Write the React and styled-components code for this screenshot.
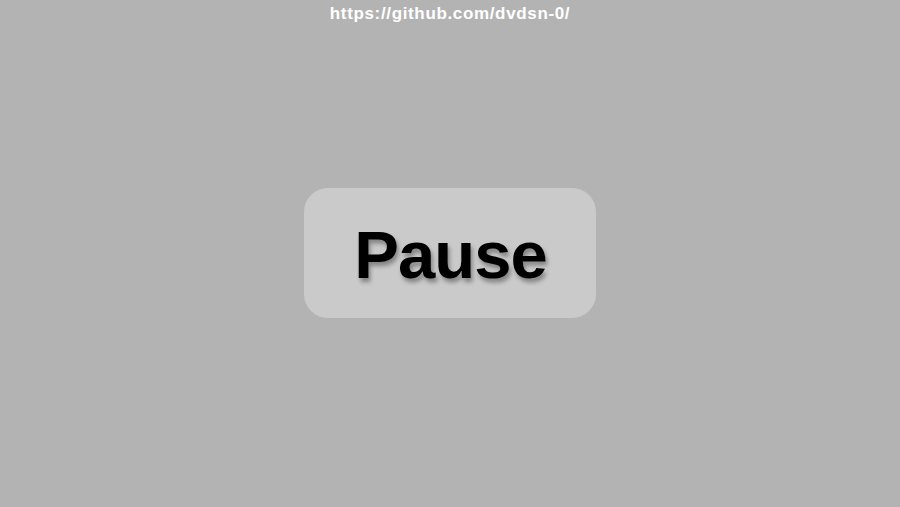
import styled, { createGlobalStyle } from 'styled-components';

const GlobalStyle = createGlobalStyle`
    html, body {
        margin: 0;
        padding: 0;
        background-color: #b3b3b3;
    }
    body {
        font-family: "Liberation Sans", Arial, sans-serif;
    }
`;

const Page = styled.div`
    // background-color: pink;
    width: 900px;
    height: 507px;
    display: flex;
    flex-direction: column;
    align-items: center;
    box-sizing: border-box;
    padding-top: 4px;
`;

const Lien = styled.a`
    color: #ffffff;
    font-size: 17px;
    font-weight: 700;
    text-decoration: none;
    line-height: 20px;
    letter-spacing: 0.65px;
`;

const Centre = styled.div`
    flex: 1;
    display: flex;
    align-items: center;
    justify-content: center;
    padding-bottom: 26px;
`;

const Bouton = styled.button`
    width: 292px;
    height: 130px;
    border: none;
    border-radius: 24px;
    background-color: #cacaca;
    color: #000000;
    font-family: "Liberation Sans", Arial, sans-serif;
    font-size: 67px;
    font-weight: 700;
    letter-spacing: -1px;
    text-shadow: 2px 4px 4px rgba(0, 0, 0, 0.35);
    cursor: pointer;
    display: flex;
    align-items: center;
    justify-content: center;
    padding: 4px 0 0 1px;
`;

function App() {
    return (
        <>
            <GlobalStyle />
            <Page>
                <Lien href="#">https://github.com/dvdsn-0/</Lien>
                <Centre>
                    <Bouton>Pause</Bouton>
                </Centre>
            </Page>
        </>
    );
}

export default App;
